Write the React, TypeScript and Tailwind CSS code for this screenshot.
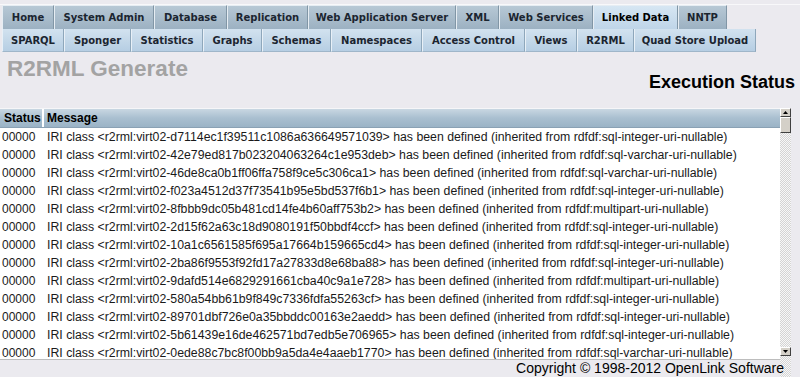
import React from "react";

const row1: [string, number, boolean][] = [
  ["Home", 52, false],
  ["System Admin", 100, false],
  ["Database", 73, false],
  ["Replication", 81, false],
  ["Web Application Server", 148, false],
  ["XML", 43, false],
  ["Web Services", 94, false],
  ["Linked Data", 85, true],
  ["NNTP", 49, false],
];

const row2: [string, number][] = [
  ["SPARQL", 62],
  ["Sponger", 67],
  ["Statistics", 72],
  ["Graphs", 59],
  ["Schemas", 69],
  ["Namespaces", 91],
  ["Access Control", 103],
  ["Views", 52],
  ["R2RML", 57],
  ["Quad Store Upload", 122],
];

const rows: [string, string][] = [
  ["d7114ec1f39511c1086a636649571039", "sql-integer-uri-nullable"],
  ["42e79ed817b023204063264c1e953deb", "sql-varchar-uri-nullable"],
  ["46de8ca0b1ff06ffa758f9ce5c306ca1", "sql-varchar-uri-nullable"],
  ["f023a4512d37f73541b95e5bd537f6b1", "sql-integer-uri-nullable"],
  ["8fbbb9dc05b481cd14fe4b60aff753b2", "multipart-uri-nullable"],
  ["2d15f62a63c18d9080191f50bbdf4ccf", "sql-integer-uri-nullable"],
  ["10a1c6561585f695a17664b159665cd4", "sql-integer-uri-nullable"],
  ["2ba86f9553f92fd17a27833d8e68ba88", "sql-integer-uri-nullable"],
  ["9dafd514e6829291661cba40c9a1e728", "multipart-uri-nullable"],
  ["580a54bb61b9f849c7336fdfa55263cf", "sql-integer-uri-nullable"],
  ["89701dbf726e0a35bbddc00163e2aedd", "sql-integer-uri-nullable"],
  ["5b61439e16de462571bd7edb5e706965", "sql-integer-uri-nullable"],
  ["0ede88c7bc8f00bb9a5da4e4aaeb1770", "sql-varchar-uri-nullable"],
];

function Arrow({ up }: { up: boolean }) {
  return (
    <svg width="5" height="3" viewBox="0 0 5 3">
      {up ? <polygon points="0,3 5,3 2.5,0" fill="#000" /> : <polygon points="0,0 5,0 2.5,3" fill="#000" />}
    </svg>
  );
}

export default function App() {
  return (
    <div className="relative w-[800px] h-[377px] overflow-hidden bg-[#ebeaef] font-['Liberation_Sans',Arial,sans-serif] text-black">
      <div className="h-[4px]" />
      <div className="border-t border-[#f8f8fa]">
        <div className="flex h-[24px] pl-[2px] font-['DejaVu_Sans',Verdana,sans-serif] text-[10px] font-bold">
          {row1.map(([t, w, active]) => (
            <div
              key={t}
              style={{ width: w }}
              className={
                "flex items-center justify-center whitespace-nowrap border-l border-r border-t border-l-[#e6edf3] border-t-[#e6edf3] border-r-[#8196a6] " +
                (active
                  ? "bg-gradient-to-b from-[#d6e6f3] to-[#bfd5e8] text-black"
                  : "bg-gradient-to-b from-[#b7c8d5] to-[#9cb1c2] text-[#1b2530]")
              }
            >
              {t}
            </div>
          ))}
        </div>
        <div className="flex h-[23px] pl-[2px] font-['DejaVu_Sans',Verdana,sans-serif] text-[10px] font-bold text-[#1b2530]">
          {row2.map(([t, w]) => (
            <div
              key={t}
              style={{ width: w }}
              className="flex items-center justify-center whitespace-nowrap border-l border-r border-b border-l-[#e8f0f7] border-r-[#8ea7bb] border-b-[#9fb6c9] bg-gradient-to-b from-[#d2e2ef] to-[#b6cee3]"
            >
              {t}
            </div>
          ))}
        </div>
      </div>

      <div className="flex h-[56px] items-start justify-between">
        <div className="ml-[7px] mt-[6px] text-[22.5px] leading-none font-bold text-[#a3a3a3]">R2RML Generate</div>
        <div className="mr-[5px] mt-[21px] text-[18px] leading-none font-bold text-black">Execution Status</div>
      </div>

      <div className="w-[780px] h-[252px] overflow-hidden border-b border-[#bdbdbd] bg-white text-[12px]">
        <div className="border-t border-[#f6f6f8] flex h-[20px] bg-gradient-to-b from-[#c9d7e2] via-[#a9bfd0] to-[#9bb3c6] border-b border-b-[#8aa1b4] font-bold items-center">
          <div className="w-[44px] h-full flex items-center pl-[4px] border-r-2 border-white">Status</div>
          <div className="pl-[3px]">Message</div>
        </div>
        {rows.map(([id, kind]) => (
          <div key={id} className="flex h-[18px] items-center whitespace-nowrap text-[#1a1a1a]">
            <div className="w-[47px] pl-[2px]">00000</div>
            <div className="text-[12.3px]">
              IRI class &lt;r2rml:virt02-{id}&gt; has been defined (inherited from rdfdf:{kind})
            </div>
          </div>
        ))}
      </div>

      <div className="absolute left-[780px] top-[108px] w-[11px] h-[269px] flex flex-col bg-[repeating-conic-gradient(#d4d4d4_0%_25%,#f7f7f7_0%_50%)] bg-[length:2px_2px]">
        <div className="h-[9px] flex items-center justify-center bg-[#d4d0c8] border border-t-white border-l-white border-r-[#404040] border-b-[#404040]">
          <Arrow up />
        </div>
        <div className="h-[16px] bg-[#d4d0c8] border border-t-white border-l-white border-r-[#404040] border-b-[#404040]" />
        <div className="flex-1" />
        <div className="h-[9px] flex items-center justify-center bg-[#d4d0c8] border border-t-white border-l-white border-r-[#404040] border-b-[#404040]">
          <Arrow up={false} />
        </div>
        <div className="h-[21px]" />
      </div>

      <div className="relative z-10 flex justify-end pr-[16px] pt-[1px] text-[14px] leading-none text-black">
        Copyright © 1998-2012 OpenLink Software
      </div>
    </div>
  );
}
